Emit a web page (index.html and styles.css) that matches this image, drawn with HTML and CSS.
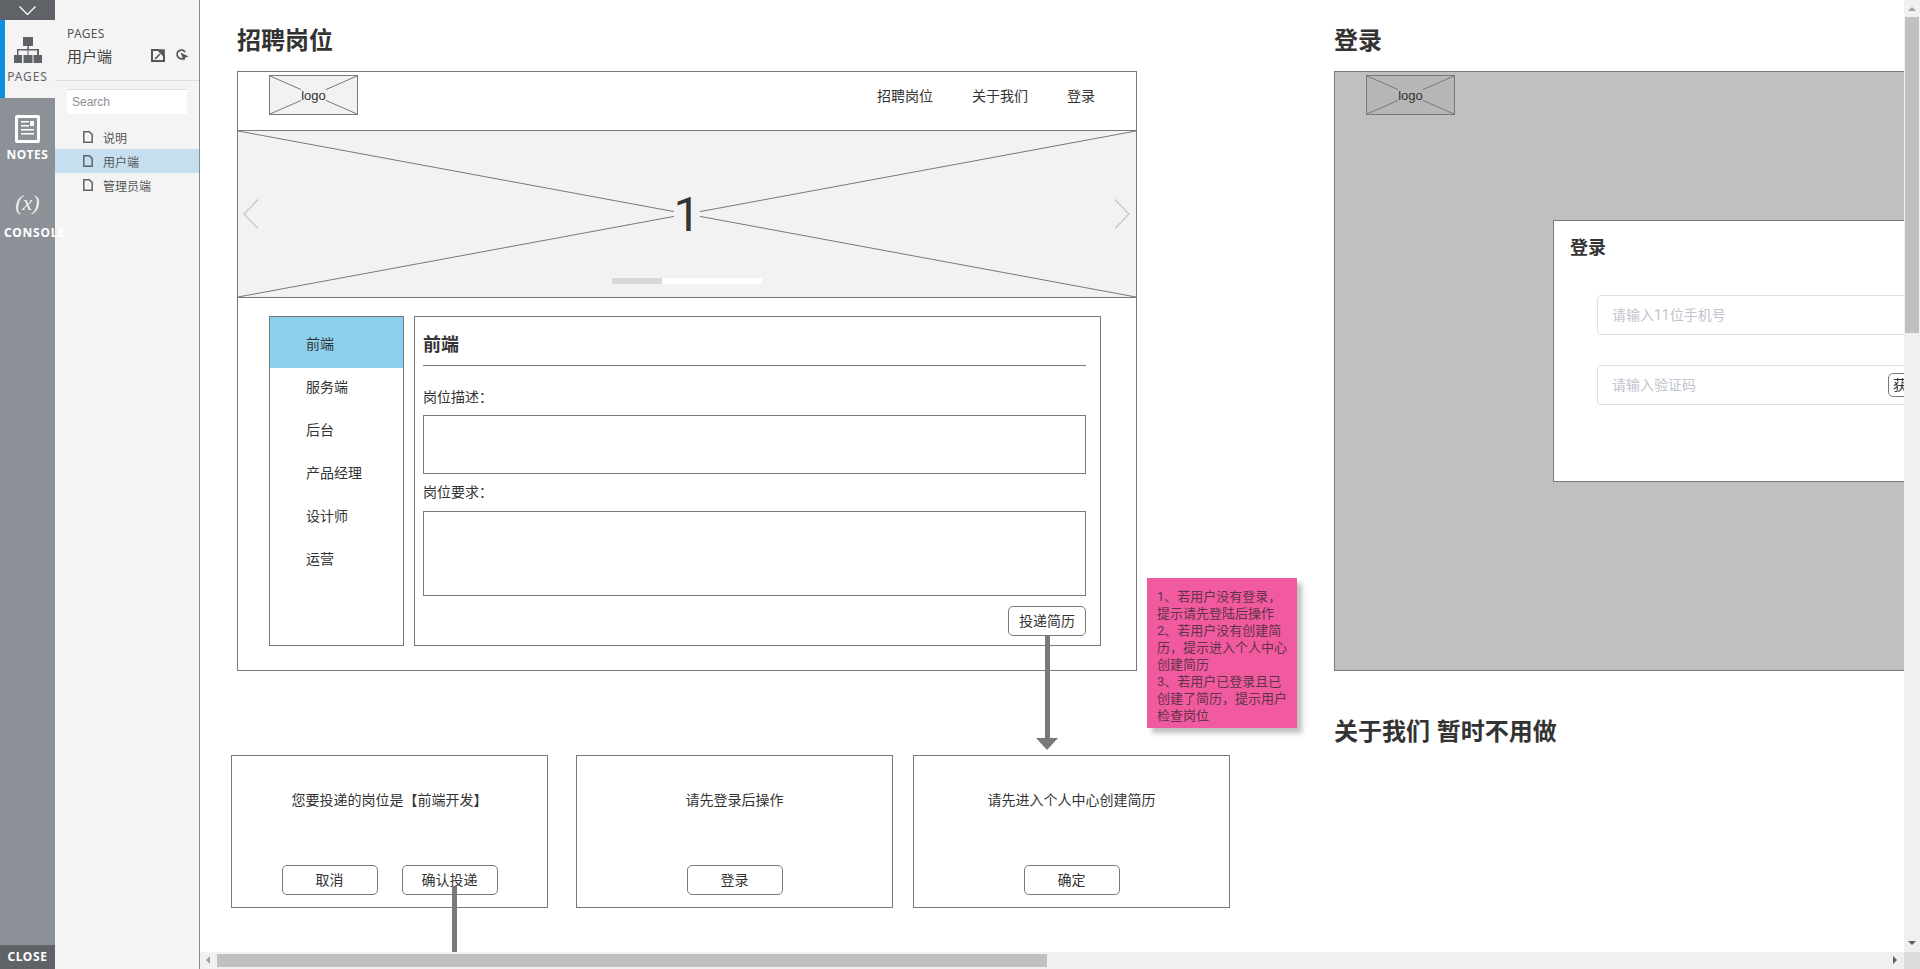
FILE: index.html
```html
<!DOCTYPE html>
<html lang="zh-CN">
<head>
<meta charset="utf-8">
<title>招聘岗位</title>
<link rel="stylesheet" href="styles.css">
</head>
<body>
<div class="app">
  <nav class="rail">
    <div class="rail-toggle">
      <svg width="17" height="9" viewBox="0 0 17 9"><path d="M.5.5l8 8 8-8" fill="none" stroke="#fff" stroke-width="1.3"/></svg>
    </div>
    <div class="rail-tab rail-tab-active">
      <svg class="tab-icon" width="28" height="26" viewBox="0 0 28 26"><path fill="#5f6368" d="M9 0h10v9h-4v3h10v6h3v8h-8.500v-8h3.500v-4.500h-8.500V18h4v8H9.500v-8H13.500v-4.500H4.500V18H8v8H0v-8h3v-6h10.500V9H9z"/></svg>
      <span class="tab-label tab-label-dark">PAGES</span>
    </div>
    <div class="rail-tab rail-tab-notes">
      <svg class="tab-icon" width="25" height="28" viewBox="0 0 25 28"><rect width="25" height="28" rx="2" fill="#fff"/><rect x="3" y="3" width="19" height="22" fill="#8c9198"/><path d="M6 6h8v1.500H6zM15 6h4v5h-4zM6 10h8v1.500H6zM6 14h13v1.500H6zM6 18h13v1.500H6z" fill="#fff"/></svg>
      <span class="tab-label tab-label-notes">NOTES</span>
    </div>
    <div class="rail-tab rail-tab-console">
      <span class="console-glyph">(x)</span>
      <span class="tab-label tab-label-console">CONSOLE</span>
    </div>
    <div class="rail-close">CLOSE</div>
  </nav>

  <aside class="panel">
    <header class="panel-head">
      <div class="panel-kicker">PAGES</div>
      <div class="panel-title-row">
        <span class="panel-title">用户端</span>
        <svg class="panel-icon" width="14" height="13" viewBox="0 0 14 13"><path d="M8 1H1v11h12V6" fill="none" stroke="#555" stroke-width="2"/><path d="M4 10l5-5M7 1h6v6z" fill="#555" stroke="#555" stroke-width="1.600"/></svg>
        <svg class="panel-icon" width="14" height="14" viewBox="0 0 14 14"><path d="M8.500 10.200A4.300 4.300 0 1 1 10 4" fill="none" stroke="#555" stroke-width="1.800"/><path d="M5.500 4.500l8 4-3.200 1-1.300 3.500z" fill="#555"/></svg>
      </div>
    </header>
    <div class="search">Search</div>
    <ul class="page-list">
      <li class="page-row"><svg class="doc" width="10" height="12" viewBox="0 0 10 12"><path d="M.8.8h5.600l2.800 2.800v7.600H.8z" fill="none" stroke="#5f6368" stroke-width="1.500"/></svg>说明</li>
      <li class="page-row page-row-active"><svg class="doc" width="10" height="12" viewBox="0 0 10 12"><path d="M.8.8h5.600l2.800 2.800v7.600H.8z" fill="none" stroke="#5f6368" stroke-width="1.500"/></svg>用户端</li>
      <li class="page-row"><svg class="doc" width="10" height="12" viewBox="0 0 10 12"><path d="M.8.8h5.600l2.800 2.800v7.600H.8z" fill="none" stroke="#5f6368" stroke-width="1.500"/></svg>管理员端</li>
    </ul>
  </aside>

  <main class="viewer">
    <div class="viewer-top">
      <div class="canvas">
        <h1 class="board-title title-jobs">招聘岗位</h1>
        <section class="frame frame-jobs">
          <header class="site-head">
            <div class="logo">
              <svg class="cross" viewBox="0 0 100 100" preserveAspectRatio="none"><path d="M0 0L100 100M100 0L0 100"/></svg>
              <span class="logo-text">logo</span>
            </div>
            <div class="site-nav"><span>招聘岗位</span><span>关于我们</span><span>登录</span></div>
          </header>
          <div class="banner">
            <svg class="cross" viewBox="0 0 100 100" preserveAspectRatio="none"><path d="M0 0L100 100M100 0L0 100"/></svg>
            <span class="banner-num">1</span>
            <svg class="banner-arrow arrow-left" width="16" height="30" viewBox="0 0 16 30"><path d="M15 .5L1 15l14 14.500" fill="none" stroke="#c4c4c4" stroke-width="1.200"/></svg>
            <svg class="banner-arrow arrow-right" width="16" height="30" viewBox="0 0 16 30"><path d="M1 .5L15 15 1 29.500" fill="none" stroke="#c4c4c4" stroke-width="1.200"/></svg>
            <div class="pager"><span class="pager-on"></span></div>
          </div>
          <div class="jobs-body">
            <ul class="job-side">
              <li class="job-item job-item-active">前端</li>
              <li class="job-item">服务端</li>
              <li class="job-item">后台</li>
              <li class="job-item">产品经理</li>
              <li class="job-item">设计师</li>
              <li class="job-item">运营</li>
            </ul>
            <div class="job-main">
              <h2 class="job-title">前端</h2>
              <div class="job-label">岗位描述：</div>
              <div class="job-box job-box-desc"></div>
              <div class="job-label job-label-second">岗位要求：</div>
              <div class="job-box job-box-req"></div>
              <div class="job-actions"><button class="btn btn-apply">投递简历</button></div>
            </div>
          </div>
        </section>

        <div class="connector connector-down"></div>
        <div class="connector-head"></div>

        <aside class="sticky">
          1、若用户没有登录，提示请先登陆后操作<br>
          2、若用户没有创建简历，提示进入个人中心创建简历<br>
          3、若用户已登录且已创建了简历，提示用户检查岗位
        </aside>

        <section class="dialog dialog-a">
          <p class="dialog-text">您要投递的岗位是【前端开发】</p>
          <div class="dialog-actions"><button class="btn btn-dialog">取消</button><button class="btn btn-dialog">确认投递</button></div>
        </section>
        <section class="dialog dialog-b">
          <p class="dialog-text">请先登录后操作</p>
          <div class="dialog-actions"><button class="btn btn-dialog">登录</button></div>
        </section>
        <section class="dialog dialog-c">
          <p class="dialog-text">请先进入个人中心创建简历</p>
          <div class="dialog-actions"><button class="btn btn-dialog">确定</button></div>
        </section>
        <div class="connector connector-out"></div>

        <h1 class="board-title title-login">登录</h1>
        <section class="frame frame-login">
          <div class="logo logo-dim">
            <svg class="cross" viewBox="0 0 100 100" preserveAspectRatio="none"><path d="M0 0L100 100M100 0L0 100"/></svg>
            <span class="logo-text">logo</span>
          </div>
          <div class="modal">
            <h2 class="modal-title">登录</h2>
            <div class="field field-first"><span class="placeholder">请输入11位手机号</span></div>
            <div class="field"><span class="placeholder">请输入验证码</span><button class="btn btn-code">获取验证码</button></div>
          </div>
        </section>
        <h1 class="board-title title-about">关于我们 暂时不用做</h1>
      </div>
      <div class="vbar">
        <span class="tri tri-up"></span>
        <div class="vbar-thumb"></div>
        <span class="tri tri-down"></span>
      </div>
    </div>
    <div class="hbar-row">
      <div class="hbar">
        <span class="tri tri-left"></span>
        <div class="hbar-thumb"></div>
        <span class="tri tri-right"></span>
      </div>
      <div class="corner"></div>
    </div>
  </main>
</div>
</body>
</html>
```
FILE: styles.css
```css
* { box-sizing: border-box; }
html, body { margin: 0; height: 100%; overflow: hidden; }
body { font-family: "Liberation Sans", "Noto Sans CJK SC", sans-serif; font-size: 14px; color: #333; background: #fff; }
ul { list-style: none; margin: 0; padding: 0; }
h1, h2, p { margin: 0; }
.app { display: flex; width: 1920px; height: 969px; }

/* rail */
.rail { width: 55px; flex: none; background: #8c9198; display: flex; flex-direction: column; position: relative; z-index: 2; }
.rail-toggle { height: 20px; background: #5f6368; display: flex; justify-content: center; align-items: center; }
.rail-tab { display: flex; flex-direction: column; align-items: center; }
.rail-tab-active { height: 78px; background: #f4f4f4; border-left: 5px solid #0f8fe0; padding-top: 17px; padding-right: 5px; margin-bottom: 17px; }
.rail-tab-notes { height: 60px; }
.rail-tab-console { margin-top: 15px; }
.tab-label { font-family: "Noto Sans", sans-serif; font-size: 12px; font-weight: 700; letter-spacing: .6px; color: #fff; line-height: 16px; margin-top: 3px; white-space: nowrap; }
.tab-label-dark { color: #5f6368; font-weight: 400; margin-top: 6px; letter-spacing: .9px; }
.tab-label-notes { margin-top: 4px; }
.tab-label-console { align-self: flex-start; margin: 9px 0 0 4px; letter-spacing: .8px; }
.console-glyph { font-family: "Liberation Serif", serif; font-style: italic; color: #f1f1f1; font-size: 22px; line-height: 26px; }
.rail-close { margin-top: auto; height: 24px; background: #5f6368; color: #fff; text-align: center; font-family: "Noto Sans", sans-serif; font-size: 12px; font-weight: 700; letter-spacing: .6px; line-height: 24px; }

/* pages panel */
.panel { width: 145px; flex: none; background: #f4f4f4; border-right: 1px solid #8a8a8a; }
.panel-head { height: 81px; padding: 26px 10px 0 12px; border-bottom: 1px solid #ddd; }
.panel-kicker { font-family: "Noto Sans", sans-serif; font-size: 12px; color: #555; line-height: 16px; letter-spacing: .3px; }
.panel-title-row { display: flex; align-items: center; margin-top: 3px; height: 20px; }
.panel-title { font-size: 15px; color: #444; margin-right: auto; }
.panel-icon { margin-left: 10px; }
.search { margin: 8px 12px 0; width: 120px; height: 25px; background: #fff; border-top: 1px solid #ddd; padding-left: 5px; font-size: 12px; line-height: 24px; color: #8a8f96; }
.page-list { margin-top: 11px; }
.page-row { height: 24px; display: flex; align-items: center; padding-left: 28px; font-size: 12px; color: #555; }
.page-row-active { background: #c6dff0; }
.doc { margin-right: 10px; flex: none; }

/* viewer */
.viewer { flex: 1; min-width: 0; display: flex; flex-direction: column; }
.viewer-top { flex: 1; display: flex; min-height: 0; }
.canvas { flex: 1; position: relative; overflow: hidden; background: #fff; }
.board-title { position: absolute; font-size: 24px; font-weight: 700; line-height: 32px; color: #333; white-space: nowrap; }
.title-jobs { left: 37px; top: 25px; }
.title-login { left: 1134px; top: 25px; }
.title-about { left: 1134px; top: 716px; }

.frame { position: absolute; border: 1px solid #797979; background: #fff; }
.frame-jobs { left: 37px; top: 71px; width: 900px; height: 600px; display: flex; flex-direction: column; }
.frame-login { left: 1134px; top: 71px; width: 900px; height: 600px; background: #c0c0c0; padding: 3px 0 0 31px; }

.cross { position: absolute; inset: 0; width: 100%; height: 100%; }
.cross path { fill: none; stroke: #797979; stroke-width: 1; vector-effect: non-scaling-stroke; }

.site-head { height: 59px; flex: none; display: flex; align-items: flex-start; padding: 3px 41px 0 31px; border-bottom: 1px solid #797979; }
.logo { position: relative; width: 89px; height: 40px; background: #f2f2f2; border: 1px solid #797979; display: flex; align-items: center; justify-content: center; }
.logo-text { position: relative; font-size: 13px; line-height: 15px; background: #f2f2f2; color: #333; }
.logo-dim { background: #b6b6b6; }
.logo-dim .logo-text { background: #b6b6b6; }
.site-nav { margin-left: auto; display: flex; gap: 39px; height: 40px; align-items: center; }
.banner { position: relative; height: 167px; flex: none; background: #f2f2f2; border-bottom: 1px solid #797979; display: flex; align-items: center; justify-content: center; }
.banner-num { position: relative; font-family: Roboto, "Liberation Sans", sans-serif; font-size: 48px; line-height: 48px; background: #f2f2f2; color: #333; margin-top: 2px; }
.banner-arrow { position: absolute; top: 68px; }
.arrow-left { left: 5px; }
.arrow-right { right: 6px; }
.pager { position: absolute; left: 374px; top: 147px; width: 150px; height: 6px; background: #fff; }
.pager-on { display: block; width: 50px; height: 6px; background: #d7d7d7; }

.jobs-body { flex: 1; display: flex; gap: 10px; padding: 18px 0 0 31px; }
.job-side { width: 135px; height: 330px; border: 1px solid #797979; display: flex; flex-direction: column; gap: 3px; }
.job-item { height: 40px; line-height: 38px; padding-left: 36px; flex: none; }
.job-item-active { height: 51px; line-height: 45px; background: #8dd0ee; padding-top: 5px; margin-bottom: -3px; }
.job-main { width: 687px; height: 330px; border: 1px solid #797979; padding: 0 14px 0 8px; display: flex; flex-direction: column; }
.job-title { height: 49px; flex: none; font-size: 18px; font-weight: 700; line-height: 44px; border-bottom: 1px solid #797979; padding-top: 6px; }
.job-label { margin-top: 20px; height: 24px; line-height: 22px; flex: none; }
.job-label-second { margin-top: 7px; }
.job-box { border: 1px solid #797979; margin-top: 5px; flex: none; }
.job-box-desc { height: 59px; }
.job-box-req { height: 85px; margin-top: 6px; }
.job-actions { display: flex; justify-content: flex-end; margin-top: 10px; }

.btn { font: inherit; color: #333; background: #fff; border: 1px solid #797979; border-radius: 5px; padding: 0 0 2px; white-space: nowrap; }
.btn-apply { width: 78px; height: 30px; }
.btn-dialog { width: 96px; height: 30px; }
.btn-code { width: 80px; height: 24px; flex: none; }

.connector { position: absolute; background: #797979; width: 5px; }
.connector-down { left: 845px; top: 635px; height: 104px; }
.connector-out { left: 252px; top: 886px; height: 66px; }
.connector-head { position: absolute; left: 836px; top: 738px; width: 0; height: 0; border-left: 11.5px solid transparent; border-right: 11.5px solid transparent; border-top: 12px solid #797979; }

.sticky { position: absolute; left: 947px; top: 578px; width: 150px; height: 150px; padding: 10px; background: #f25a9f; box-shadow: 5px 5px 5px rgba(0, 0, 0, .25); font-family: Roboto, "Noto Sans CJK SC", sans-serif; font-size: 13px; line-height: 17px; color: #5f3349; }

.dialog { position: absolute; top: 755px; width: 317px; height: 153px; border: 1px solid #797979; background: #fff; display: flex; flex-direction: column; align-items: center; padding: 32px 0 12px; }
.dialog-a { left: 31px; }
.dialog-b { left: 376px; }
.dialog-c { left: 713px; }
.dialog-text { line-height: 24px; }
.dialog-actions { margin-top: auto; display: flex; gap: 24px; }

.modal { position: absolute; left: 218px; top: 148px; width: 480px; height: 262px; background: #fff; border: 1px solid #797979; padding: 12px 0 0 43px; }
.modal-title { font-size: 18px; font-weight: 700; line-height: 30px; margin-left: -27px; color: #333; }
.field { width: 380px; height: 40px; border: 1px solid #dcdfe6; border-radius: 4px; background: #fff; margin-top: 30px; display: flex; align-items: center; justify-content: space-between; padding: 0 8px 0 14px; }
.field-first { margin-top: 32px; }
.placeholder { font-family: Roboto, "Noto Sans CJK SC", sans-serif; color: #c0c4cc; padding-bottom: 2px; }

/* scrollbars */
.vbar { width: 16px; flex: none; background: #f0f0f0; position: relative; z-index: 1; }
.vbar-thumb { position: absolute; left: 1px; top: 17px; width: 14px; height: 316px; background: #c0c0c0; }
.hbar-row { height: 17px; flex: none; display: flex; }
.hbar { flex: 1; background: #f0f0f0; position: relative; }
.hbar-thumb { position: absolute; left: 17px; top: 2px; width: 830px; height: 13px; background: #c0c0c0; }
.corner { width: 16px; background: #dcdcdc; }
.tri { position: absolute; width: 0; height: 0; border-style: solid; border-color: transparent; }
.tri-up { left: 4px; top: 7px; border-width: 0 4px 4px; border-bottom-color: #a0a0a0; }
.tri-down { left: 4px; bottom: 7px; border-width: 4px 4px 0; border-top-color: #606060; }
.tri-left { left: 6px; top: 4px; border-width: 4px 4px 4px 0; border-right-color: #a0a0a0; }
.tri-right { right: 7px; top: 4px; border-width: 4px 0 4px 4px; border-left-color: #606060; }
```
